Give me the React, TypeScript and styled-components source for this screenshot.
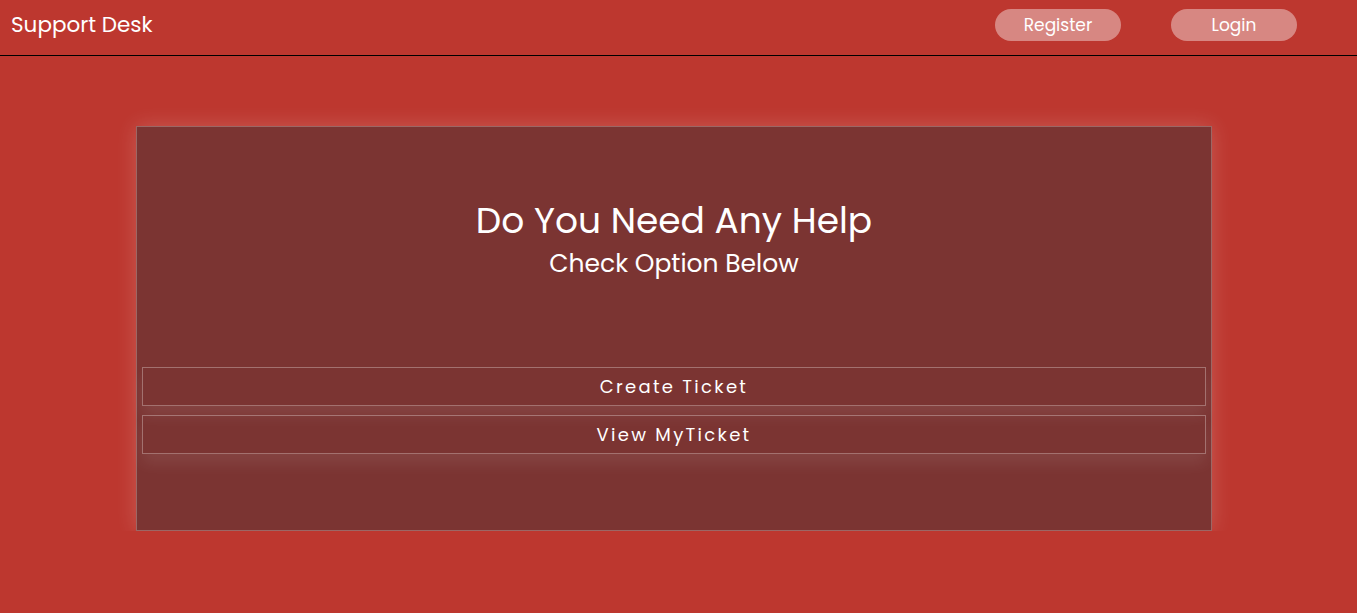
import styled, { createGlobalStyle } from "styled-components";

const GlobalStyle = createGlobalStyle`
  * {
    box-sizing: border-box;
  }
  body {
    margin: 0;
    background-color: #bd372f;
    font-family: "Poppins", "Inter", "Noto Sans", sans-serif;
    color: #fff;
  }
`;

const HeaderBar = styled.header`
  height: 56px;
  display: flex;
  align-items: center;
  justify-content: space-between;
  padding: 0 60px 6px 11px;
  border-bottom: 1px solid #000;
`;

const Brand = styled.h1`
  margin: 0;
  font-size: 21.5px;
  font-weight: 400;
  color: #fff;
`;

const NavButtons = styled.nav`
  display: flex;
  gap: 50px;
`;

const PillButton = styled.button`
  width: 126px;
  height: 32px;
  border: none;
  border-radius: 16px;
  background-color: rgba(255, 255, 255, 0.4);
  color: #fff;
  font-family: inherit;
  font-size: 17px;
  cursor: pointer;
`;

const Main = styled.main`
  padding: 70px 0 0 136px;
`;

const Card = styled.section`
  width: 1076px;
  height: 405px;
  background-color: #7b3432;
  border: 1px solid rgba(255, 255, 255, 0.25);
  box-shadow: 0 0 20px rgba(255, 255, 255, 0.18);
  padding: 0 5px;
  display: flex;
  flex-direction: column;
`;

const Intro = styled.div`
  text-align: center;
  padding-top: 73px;
  height: 240px;
`;

const Title = styled.h2`
  margin: 0;
  font-size: 36px;
  font-weight: 400;
  line-height: 42px;
`;

const Subtitle = styled.h3`
  margin: 0;
  font-size: 25px;
  font-weight: 400;
  line-height: 44px;
`;

const Options = styled.div`
  display: flex;
  flex-direction: column;
  gap: 9px;
`;

const OptionButton = styled.button`
  height: 39px;
  width: 100%;
  background-color: transparent;
  border: 1px solid rgba(255, 255, 255, 0.3);
  box-shadow: 0 10px 15px rgba(255, 255, 255, 0.08);
  color: #fff;
  font-family: inherit;
  font-size: 18px;
  letter-spacing: 2.3px;
  cursor: pointer;
`;

export default function App() {
  return (
    <>
      <GlobalStyle />
      <HeaderBar>
        <Brand>Support Desk</Brand>
        <NavButtons>
          <PillButton>Register</PillButton>
          <PillButton>Login</PillButton>
        </NavButtons>
      </HeaderBar>
      <Main>
        <Card>
          <Intro>
            <Title>Do You Need Any Help</Title>
            <Subtitle>Check Option Below</Subtitle>
          </Intro>
          <Options>
            <OptionButton>Create Ticket</OptionButton>
            <OptionButton>View MyTicket</OptionButton>
          </Options>
        </Card>
      </Main>
    </>
  );
}
